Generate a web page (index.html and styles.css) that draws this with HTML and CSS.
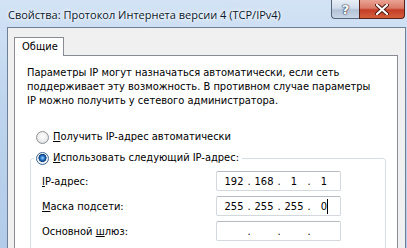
FILE: index.html
```html
<!DOCTYPE html>
<html lang="ru">
<head>
    <meta charset="UTF-8">
    <title>Свойства: Протокол Интернета версии 4 (TCP/IPv4)</title>
    <link rel="stylesheet" href="styles.css">
</head>
<body>
    <div class="window">
        <div class="titlebar">
            <span class="title">Свойства: Протокол Интернета версии 4 (TCP/IPv4)</span>
            <div class="btn-help">?</div>
            <div class="btn-close">
                <svg width="14" height="11" viewBox="0 0 14 11">
                    <path d="M2 1 L12 10 M12 1 L2 10" stroke="#4a1510" stroke-width="4" stroke-linecap="round"/>
                    <path d="M2 1 L12 10 M12 1 L2 10" stroke="#ffffff" stroke-width="2.2" stroke-linecap="round"/>
                </svg>
            </div>
        </div>

        <div class="dialog">
            <div class="tabs">
                <span class="tab active">Общие</span>
            </div>
            <div class="tab-panel">
                <p class="intro">Параметры IP могут назначаться автоматически, если сеть<br>поддерживает эту возможность. В противном случае параметры<br>IP можно получить у сетевого администратора.</p>

                <div class="radio-row first">
                    <span class="radio"></span>
                    <span><u>П</u>олучить IP-адрес автоматически</span>
                </div>

                <fieldset class="group">
                    <legend class="radio-row">
                        <span class="radio checked"></span>
                        <span><u>И</u>спользовать следующий IP-адрес:</span>
                    </legend>

                    <div class="field-row">
                        <label><u>I</u>P-адрес:</label>
                        <div class="ip-box">
                            <span class="oct">192</span><span class="dot">.</span>
                            <span class="oct">168</span><span class="dot">.</span>
                            <span class="oct">1</span><span class="dot">.</span>
                            <span class="oct">1</span>
                        </div>
                    </div>
                    <div class="field-row">
                        <label><u>М</u>аска подсети:</label>
                        <div class="ip-box">
                            <span class="oct">255</span><span class="dot">.</span>
                            <span class="oct">255</span><span class="dot">.</span>
                            <span class="oct">255</span><span class="dot">.</span>
                            <span class="oct"><span class="caret">0</span></span>
                        </div>
                    </div>
                    <div class="field-row">
                        <label>Основной <u>ш</u>люз:</label>
                        <div class="ip-box">
                            <span class="oct"></span><span class="dot">.</span>
                            <span class="oct"></span><span class="dot">.</span>
                            <span class="oct"></span><span class="dot">.</span>
                            <span class="oct"></span>
                        </div>
                    </div>
                </fieldset>
            </div>
        </div>
    </div>
</body>
</html>
```

FILE: styles.css
```css
body {
    margin: 0;
    font-family: "DejaVu Sans Condensed", "DejaVu Sans", sans-serif;
    font-size: 11px;
    color: #000;
}

.window {
    width: 407px;
    height: 248px;
    overflow: hidden;
    display: flex;
    flex-direction: column;
    background: linear-gradient(180deg, #d3e3f5 0%, #bfd5ee 40%, #b2cbe8 100%);
}

/* Заголовок окна */
.titlebar {
    height: 27px;
    display: grid;
    grid-template-columns: 1fr 28px 46px;
    align-items: start;
    padding: 0 2px 0 8px;
    flex-shrink: 0;
}

    .titlebar .title {
        margin-top: 7px;
        line-height: 16px;
        font-family: "Open Sans", sans-serif;
        font-size: 11px;
        color: #0b1a2c;
        text-shadow: 0 0 6px #fff, 0 0 3px #fff;
        white-space: nowrap;
    }

.btn-help,
.btn-close {
    height: 19px;
    display: flex;
    align-items: center;
    justify-content: center;
    box-sizing: border-box;
    border: 1px solid #56667a;
    border-top: none;
}

.btn-help {
    border-right: none;
    border-radius: 0 0 0 4px;
    background: linear-gradient(180deg, #e7eef6 0%, #d2dceb 45%, #b3c2d6 55%, #c9d6e6 100%);
    font-family: "DejaVu Sans", sans-serif;
    font-weight: bold;
    font-size: 13px;
    color: #fff;
    text-shadow: 0 0 2px #2d3d52, 0 0 1px #2d3d52, 0 0 1px #2d3d52;
}

.btn-close {
    border-color: #5a2019;
    border-radius: 0 0 4px 0;
    background: linear-gradient(180deg, #eba393 0%, #d97a68 45%, #c43d27 55%, #d4603c 100%);
}

/* Тело диалога */
.dialog {
    flex: 1;
    display: flex;
    flex-direction: column;
    margin: 0 1px 0 7px;
    padding: 9px 7px 0 6px;
    background: #f0f0f0;
    border: 1px solid #6d8097;
    border-bottom: none;
}

.tabs {
    display: flex;
    height: 18px;
}

    .tabs .tab {
        width: 50px;
        height: 19px;
        box-sizing: border-box;
        padding-left: 7px;
        line-height: 17px;
        background: #fff;
        border: 1px solid #898c95;
        border-bottom: none;
        position: relative;
        z-index: 1;
    }

.tab-panel {
    flex: 1;
    background: #fff;
    border: 1px solid #898c95;
    border-bottom: none;
    padding: 10px 12px 0 12px;
}

.intro {
    margin: 0;
    line-height: 14px;
    white-space: nowrap;
}

.radio-row {
    display: flex;
    align-items: center;
    height: 14px;
    line-height: 14px;
    white-space: nowrap;
}

    .radio-row.first {
        margin: 22px 0 0 9px;
    }

.radio {
    width: 13px;
    height: 13px;
    margin-right: 4px;
    box-sizing: border-box;
    border-radius: 50%;
    border: 1px solid #8e9196;
    background: radial-gradient(circle at 50% 40%, #ffffff 0%, #ececec 55%, #cfd1d3 100%);
}

    .radio.checked {
        border-color: #3f6a93;
        background: radial-gradient(circle at 50% 45%, #a7dcff 0, #3c8bd8 1.6px, #1552a0 3px, #0d3b78 3.8px, #f2f4f6 4.3px, #dde2e7 100%);
    }

/* Группа "Использовать следующий IP-адрес" */
.group {
    width: 356px;
    box-sizing: border-box;
    margin: 7px 0 0 3px;
    padding: 0 0 20px 11px;
    border: 1px solid #d5dfe5;
    border-radius: 3px;
}

    .group legend {
        margin-left: -8px;
        padding: 0 3px 0 2px;
    }

.field-row {
    display: flex;
    align-items: center;
    height: 20px;
    margin-top: 6px;
}

    .field-row + .field-row {
        margin-top: 5px;
    }

    .field-row label {
        width: 174px;
        flex-shrink: 0;
    }

.ip-box {
    width: 125px;
    height: 20px;
    box-sizing: border-box;
    display: flex;
    align-items: center;
    padding-left: 4px;
    border: 1px solid #d3d7de;
    border-top-color: #b6bbc3;
    border-radius: 2px;
}

    .ip-box .oct {
        width: 26px;
        text-align: center;
    }

    .ip-box .dot {
        width: 4px;
        text-align: center;
    }

.caret {
    position: relative;
}

    .caret::after {
        content: "";
        position: absolute;
        left: 100%;
        top: -1px;
        bottom: -1px;
        width: 1px;
        background: #000;
    }
```
